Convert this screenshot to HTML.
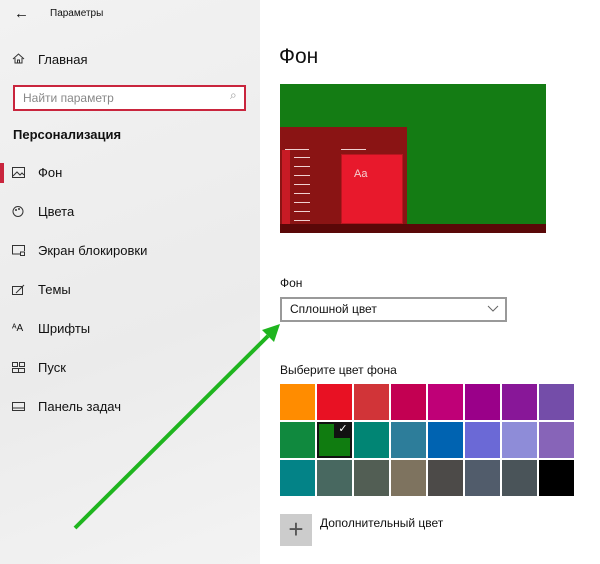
<!DOCTYPE html>
<html><head><meta charset="utf-8"><style>
*{margin:0;padding:0;box-sizing:border-box}
body{width:600px;height:564px;overflow:hidden;font-family:"Liberation Sans",sans-serif;background:#fff;position:relative;color:#111}
.left{position:absolute;left:0;top:0;width:260px;height:564px;background:linear-gradient(160deg,#f2f2f2,#ebebeb 60%,#f3f3f3)}
.a{position:absolute;white-space:nowrap}
.nav{font-size:13px;left:38px}
.ic{position:absolute;left:12px;width:13px;height:11px}
.sw{position:absolute;width:35px;height:36px}
</style></head><body>
<div class="left"></div>
<div class="a" style="left:14px;top:5px;font-size:15px">←</div>
<div class="a" style="left:50px;top:8px;font-size:10px">Параметры</div>
<svg class="ic" style="top:53px" viewBox="0 0 13 11"><path d="M1 6L6.5 1L12 6M3 5v5h7V5M5.5 10V7h2v3" fill="none" stroke="#333"/></svg>
<div class="a nav" style="top:52px">Главная</div>
<div class="a" style="left:13px;top:85px;width:233px;height:26px;border:2px solid #c9253d;background:#fff"></div>
<div class="a" style="left:23px;top:91px;font-size:12px;color:#888">Найти параметр</div>
<div class="a" style="left:230px;top:88px;font-size:12px;color:#999">⌕</div>
<div class="a" style="left:13px;top:127px;font-size:13px;font-weight:bold">Персонализация</div>
<div class="a" style="left:0;top:163px;width:4px;height:20px;background:#c9253d"></div>
<svg class="ic" style="top:167px" viewBox="0 0 13 11"><rect x=".5" y=".5" width="12" height="10" fill="none" stroke="#333"/><path d="M1 9l4-4 3 3 2-2 2 2" fill="none" stroke="#333"/></svg>
<div class="a nav" style="top:165px">Фон</div>
<svg class="ic" style="top:206px" viewBox="0 0 13 11"><circle cx="6" cy="5.5" r="5" fill="none" stroke="#333"/><circle cx="4" cy="4" r="1" fill="#333"/><circle cx="7" cy="3" r="1" fill="#333"/></svg>
<div class="a nav" style="top:204px">Цвета</div>
<svg class="ic" style="top:245px" viewBox="0 0 13 11"><path d="M8 9H.5V.5h12V6" fill="none" stroke="#333"/><rect x="8.5" y="7" width="4" height="3.5" fill="none" stroke="#333"/></svg>
<div class="a nav" style="top:243px">Экран блокировки</div>
<svg class="ic" style="top:284px" viewBox="0 0 13 11"><rect x=".5" y="2.5" width="10" height="8" fill="none" stroke="#333"/><path d="M4 9L12 1" stroke="#333"/></svg>
<div class="a nav" style="top:282px">Темы</div>
<div class="a" style="left:12px;top:323px;font-size:10px">ᴬA</div>
<div class="a nav" style="top:321px">Шрифты</div>
<svg class="ic" style="top:362px" viewBox="0 0 13 11"><path d="M.5.5h5v4h-5zM7.5.5h5v4h-5zM.5 6.5h12v4H.5zM6.5 6.5v4" fill="none" stroke="#333"/></svg>
<div class="a nav" style="top:360px">Пуск</div>
<svg class="ic" style="top:401px" viewBox="0 0 13 11"><rect x=".5" y="1.5" width="12" height="8" fill="none" stroke="#333"/><path d="M1 7h11" stroke="#333"/></svg>
<div class="a nav" style="top:399px">Панель задач</div>

<div class="a" style="left:279px;top:45px;font-size:21px">Фон</div>
<div class="a" style="left:280px;top:84px;width:266px;height:149px;background:#147c14"></div>
<div class="a" style="left:280px;top:127px;width:127px;height:97px;background:#8a1414"></div>
<div class="a" style="left:282px;top:150px;width:8px;height:74px;background:#c81b25"></div>
<div class="a" style="left:341px;top:154px;width:62px;height:70px;background:#e8192c;border:1px solid #b8151f"></div>
<div class="a" style="left:354px;top:168px;font-size:11px;color:#f4d0d0">Aa</div>
<div class="a" style="left:294px;top:150px;width:16px;height:74px;background:repeating-linear-gradient(#8a1414 0 7px,#f0d0d0 7px 8px,#8a1414 8px 9px)"></div>
<div class="a" style="left:285px;top:149px;width:24px;height:1px;background:#f0d0d0"></div>
<div class="a" style="left:341px;top:149px;width:25px;height:1px;background:#f0d0d0"></div>
<div class="a" style="left:280px;top:224px;width:266px;height:9px;background:#5a0808"></div>

<div class="a" style="left:280px;top:276px;font-size:12px">Фон</div>
<div class="a" style="left:280px;top:297px;width:227px;height:25px;border:2px solid #999;background:#fff"></div>
<div class="a" style="left:290px;top:302px;font-size:12px">Сплошной цвет</div>
<svg class="a" style="left:487px;top:305px" width="12" height="8"><path d="M1 1l5 5 5-5" fill="none" stroke="#666"/></svg>
<div class="a" style="left:280px;top:363px;font-size:12px">Выберите цвет фона</div>

<div class="sw" style="left:280px;top:384px;background:#ff8c00"></div>
<div class="sw" style="left:317px;top:384px;background:#e81123"></div>
<div class="sw" style="left:354px;top:384px;background:#d13438"></div>
<div class="sw" style="left:391px;top:384px;background:#c30052"></div>
<div class="sw" style="left:428px;top:384px;background:#bf0077"></div>
<div class="sw" style="left:465px;top:384px;background:#9a0089"></div>
<div class="sw" style="left:502px;top:384px;background:#881798"></div>
<div class="sw" style="left:539px;top:384px;background:#744da9"></div>
<div class="sw" style="left:280px;top:422px;background:#10893e"></div>
<div class="sw" style="left:317px;top:422px;background:#107c10;border:2px solid #111"></div>
<div class="a" style="left:334px;top:422px;width:18px;height:16px;background:#111;color:#fff;font-size:11px;text-align:center">✓</div>
<div class="sw" style="left:354px;top:422px;background:#018574"></div>
<div class="sw" style="left:391px;top:422px;background:#2d7d9a"></div>
<div class="sw" style="left:428px;top:422px;background:#0063b1"></div>
<div class="sw" style="left:465px;top:422px;background:#6b69d6"></div>
<div class="sw" style="left:502px;top:422px;background:#8e8cd8"></div>
<div class="sw" style="left:539px;top:422px;background:#8764b8"></div>
<div class="sw" style="left:280px;top:460px;background:#038387"></div>
<div class="sw" style="left:317px;top:460px;background:#486860"></div>
<div class="sw" style="left:354px;top:460px;background:#525e54"></div>
<div class="sw" style="left:391px;top:460px;background:#7e735f"></div>
<div class="sw" style="left:428px;top:460px;background:#4c4a48"></div>
<div class="sw" style="left:465px;top:460px;background:#515c6b"></div>
<div class="sw" style="left:502px;top:460px;background:#4a5459"></div>
<div class="sw" style="left:539px;top:460px;background:#000"></div>

<div class="a" style="left:280px;top:514px;width:32px;height:32px;background:#ccc;color:#555;font-size:26px;line-height:30px;text-align:center;font-weight:300">+</div>
<div class="a" style="left:320px;top:516px;font-size:12px">Дополнительный цвет</div>

<svg class="a" style="left:0;top:0" width="600" height="564"><path d="M75 528L268 336" stroke="#1fb51f" stroke-width="4"/><path d="M280 324L262 330L274 342Z" fill="#1fb51f"/></svg>
</body></html>
